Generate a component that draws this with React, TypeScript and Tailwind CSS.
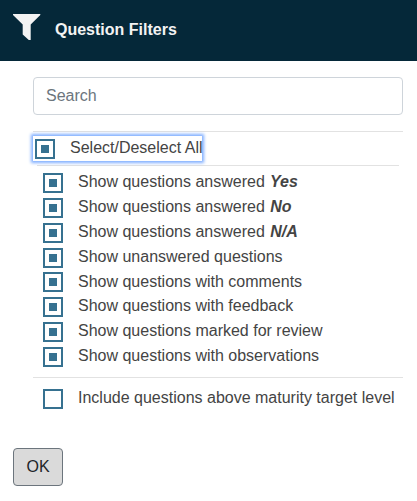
import React from "react";

function Box({ checked }: { checked: boolean }) {
  return (
    <span className="flex h-5 w-5 shrink-0 items-center justify-center border-2 border-[#367190] bg-white">
      {checked && <span className="h-2 w-2 bg-[#367190]" />}
    </span>
  );
}

const filters: { label: string; answer?: string }[] = [
  { label: "Show questions answered", answer: "Yes" },
  { label: "Show questions answered", answer: "No" },
  { label: "Show questions answered", answer: "N/A" },
  { label: "Show unanswered questions" },
  { label: "Show questions with comments" },
  { label: "Show questions with feedback" },
  { label: "Show questions marked for review" },
  { label: "Show questions with observations" },
];

export default function App() {
  return (
    <div className="h-[501px] w-[417px] overflow-hidden bg-white font-['Liberation_Sans',Arial,sans-serif] text-base text-[#444444]">
      <header className="flex h-[61px] items-start bg-[#052839] pl-[13px] pt-3.5 text-[#f3f3f3]">
        <svg width="28" height="27" viewBox="0 0 28 27" fill="currentColor" aria-hidden="true">
          <path d="M0 0H27.3V1L17.7 10.5V26H15.8L9.7 20.5V10.5L0 1Z" />
        </svg>
        <h1 className="ml-3.5 mt-1 text-base font-bold leading-6">Question Filters</h1>
      </header>
      <main className="pl-[33px] pr-3.5 pt-4">
        <input
          type="text"
          placeholder="Search"
          className="block h-[38px] w-full rounded border border-[#ced4da] px-3 text-base outline-none placeholder:text-[#6c757d]"
        />
        <div className="mt-4 h-[34px] border-t border-[#e2e2e2] pt-1">
          <label className="relative flex h-[25px] w-[169px] items-start whitespace-nowrap bg-white pl-0.5 pt-[3px] shadow-[0_0_3px_2px_#80afff]">
            <Box checked />
            <span className="-mt-[3px] ml-[15px] leading-6">Select/Deselect All</span>
          </label>
        </div>
        <div className="mx-1 h-px bg-[#e2e2e2]" />
        <div className="pl-2.5 pt-[7.2px]">
          {filters.map((f, i) => (
            <label key={i} className="flex h-[24.8px] items-start">
              <Box checked />
              <span className="-mt-[2.8px] ml-[15px] whitespace-nowrap leading-6">
                {f.label}
                {f.answer && <b className="ml-px italic"> {f.answer}</b>}
              </span>
            </label>
          ))}
        </div>
        <div className="mt-[5.4px] h-px bg-[#e2e2e2]" />
        <label className="mt-[11px] flex h-5 items-start pl-2.5">
          <Box checked={false} />
          <span className="-mt-[3px] ml-[15px] whitespace-nowrap leading-6">
            Include questions above maturity target level
          </span>
        </label>
      </main>
      <button className="ml-[13px] mt-[39px] h-[38px] w-[50px] rounded border border-[#6c757d] bg-[#dadada] text-base text-[#212529]">
        OK
      </button>
    </div>
  );
}
